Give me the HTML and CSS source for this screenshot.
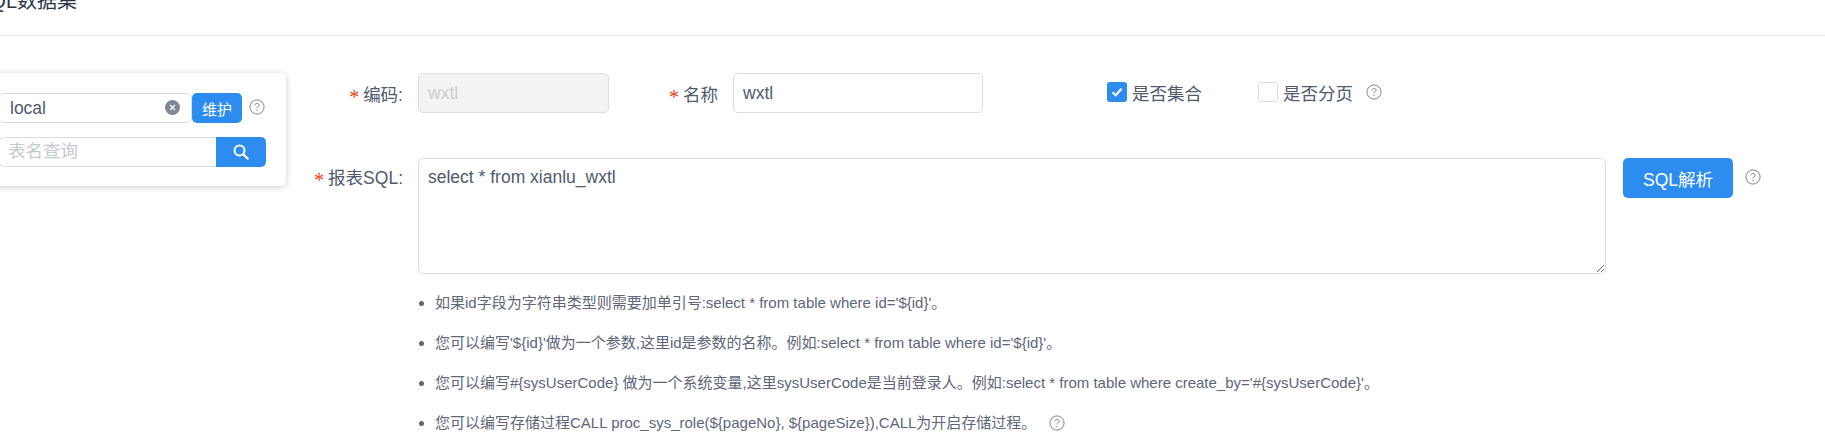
FILE: index.html
```html
<!DOCTYPE html>
<html lang="zh-CN">
<head>
<meta charset="utf-8">
<title>SQL数据集</title>
<link rel="stylesheet" href="styles.css">
</head>
<body>
<svg class="sprites" width="0" height="0" aria-hidden="true">
  <symbol id="help" viewBox="0 0 16 16">
    <circle cx="8" cy="8" r="7.1" fill="none" stroke="#808695" stroke-width="1"/>
    <path d="M5.9 6.3C6 5 6.9 4.3 8 4.3c1.2 0 2.1.8 2.1 1.8 0 .8-.4 1.2-1.1 1.7-.7.5-1 .9-1 1.7" fill="none" stroke="#808695" stroke-width="1"/>
    <circle cx="8" cy="11.4" r=".7" fill="#808695"/>
  </symbol>
</svg>
<div class="page">
  <header class="head"><h1 class="title">SQL数据集</h1></header>
  <div class="content">
    <aside class="side">
      <div class="panel">
        <div class="source-row">
          <div class="select">
            <input class="field select-input" value="local">
            <span class="clear"><svg viewBox="0 0 15 15" width="15" height="15"><circle cx="7.5" cy="7.5" r="7.5" fill="#808695"/><path d="M5 5l5 5M10 5l-5 5" stroke="#fff" stroke-width="1.2"/></svg></span>
          </div>
          <button class="btn btn-small" type="button">维护</button>
          <svg class="help help-source"><use href="#help"/></svg>
        </div>
        <div class="search-row">
          <input class="field search-input" placeholder="表名查询">
          <button class="search-btn" type="button" aria-label="查询"><svg viewBox="0 0 18 18" width="18" height="18"><circle cx="7.5" cy="7.5" r="5" fill="none" stroke="#fff" stroke-width="2"/><path d="M11.2 11.2l4.6 4.6" stroke="#fff" stroke-width="2.2" stroke-linecap="round"/></svg></button>
        </div>
      </div>
    </aside>
    <main class="form">
      <div class="row row-top">
        <label class="label"><span class="star">*</span>编码:</label>
        <input class="field code-input" value="wxtl" disabled>
        <label class="label label-name"><span class="star">*</span>名称</label>
        <input class="field name-input" value="wxtl">
        <span class="check check-first"><span class="box box-on"><svg viewBox="0 0 20 20" width="20" height="20"><path d="M5.5 10.2l3.2 3 5.8-6.4" fill="none" stroke="#fff" stroke-width="2.2"/></svg></span>是否集合</span>
        <span class="check check-second"><span class="box"></span>是否分页</span>
        <svg class="help help-page"><use href="#help"/></svg>
      </div>
      <div class="row row-sql">
        <label class="label label-sql"><span class="star">*</span>报表SQL:</label>
        <textarea class="field sql-input">select * from xianlu_wxtl</textarea>
        <button class="btn btn-parse" type="button">SQL解析</button>
        <svg class="help help-parse"><use href="#help"/></svg>
      </div>
      <ul class="notes">
        <li>如果id字段为字符串类型则需要加单引号:select * from table where id='${id}'。</li>
        <li>您可以编写'${id}'做为一个参数,这里id是参数的名称。例如:select * from table where id='${id}'。</li>
        <li>您可以编写#{sysUserCode} 做为一个系统变量,这里sysUserCode是当前登录人。例如:select * from table where create_by='#{sysUserCode}'。</li>
        <li>您可以编写存储过程CALL proc_sys_role(${pageNo}, ${pageSize}),CALL为开启存储过程。<svg class="help help-note"><use href="#help"/></svg></li>
      </ul>
    </main>
  </div>
</div>
</body>
</html>
```
FILE: styles.css
```css
* { box-sizing: border-box; }
html, body { margin: 0; height: 100%; overflow: hidden; background: #fff; }
body {
  font-family: "Liberation Sans", "Noto Sans CJK SC", sans-serif;
  font-size: 17.5px;
  color: #515a6e;
}
.sprites { position: absolute; }
.page { margin-left: -20px; }

.head { display: flow-root; height: 36px; border-bottom: 1px solid #e8eaec; }
.title {
  margin: -9px 0 0 -3px;
  font-size: 20px;
  line-height: 20px;
  font-weight: 400;
  color: #2b3346;
}

.content { display: flex; padding-top: 37px; }
.side { width: 306px; flex: none; }
.panel {
  height: 113px;
  padding: 20px 20px 0 19px;
  background: #fff;
  border-radius: 5px;
  box-shadow: 0 1px 6px rgba(0, 0, 0, .2);
}

.field {
  display: block;
  height: 30px;
  padding: 0 9px;
  border: 1px solid #dcdee2;
  border-radius: 5px;
  background: #fff;
  color: #515a6e;
  font: inherit;
  outline: none;
}
.field::placeholder { color: #c5c8ce; opacity: 1; }

.source-row, .search-row { display: flex; }
.source-row { align-items: flex-start; }
.search-row { margin-top: 14px; }
.select { position: relative; flex: 1; }
.select-input { width: 100%; padding-left: 10px; }
.clear { position: absolute; right: 12px; top: 7px; height: 15px; line-height: 0; }
.btn {
  border: 0;
  border-radius: 5px;
  background: #2d8cf0;
  color: #fff;
  font-family: inherit;
  padding: 0;
}
.btn-small { width: 50px; height: 30px; font-size: 15px; flex: none; }
.help { display: block; width: 16px; height: 16px; flex: none; }
.help-source { margin: 6px 1px 0 7px; }
.search-input { flex: 1; min-width: 0; padding: 0 9px 2px 8px; border-right: 0; border-radius: 5px 0 0 5px; }
.search-btn {
  display: flex;
  align-items: center;
  justify-content: center;
  width: 50px;
  height: 30px;
  padding: 0;
  border: 0;
  border-radius: 0 5px 5px 0;
  background: #2d8cf0;
}

.form { flex: 1; min-width: 0; }
.row { display: flex; }
.row-top { align-items: center; height: 40px; }
.label { width: 117px; flex: none; text-align: right; margin-right: 15px; }
.star {
  color: #ed4014;
  font-family: "Liberation Serif", serif;
  font-size: 20px;
  line-height: 0;
  vertical-align: -3px;
  margin-right: 4px;
}
.code-input {
  width: 191px;
  height: 40px;
  padding: 0 9px;
  background: #f3f3f3;
  color: #ccc;
}
.label-name { width: 109px; }
.name-input { width: 250px; height: 40px; padding: 0 9px; }
.check { display: flex; align-items: center; white-space: nowrap; margin-top: -2px; }
.box {
  display: block;
  width: 20px;
  height: 20px;
  margin-right: 5px;
  border: 1px solid #dcdee2;
  border-radius: 3px;
  background: #fff;
  line-height: 0;
}
.box-on { border: 0; background: #2d8cf0; }
.check-first { margin-left: 124px; }
.check-second { margin-left: 56px; }
.help-page { margin: -2px 0 0 13px; }

.row-sql { margin-top: 45px; align-items: flex-start; }
.label-sql { line-height: 40px; height: 40px; }
.sql-input {
  width: 1188px;
  height: 116px;
  padding: 5px 9px;
  line-height: 26px;
  resize: both;
}
.btn-parse { width: 110px; height: 40px; margin-left: 17px; font-size: 17.5px; flex: none; }
.help-parse { margin: 11px 0 0 12px; }

.notes {
  list-style: disc;
  margin: 9px 0 0;
  padding: 0 0 0 149px;
  font-size: 15px;
}
.notes li { height: 40px; line-height: 40px; color: #5e6678; }
.help-note { display: inline-block; vertical-align: -3px; margin-left: 13px; }
```
